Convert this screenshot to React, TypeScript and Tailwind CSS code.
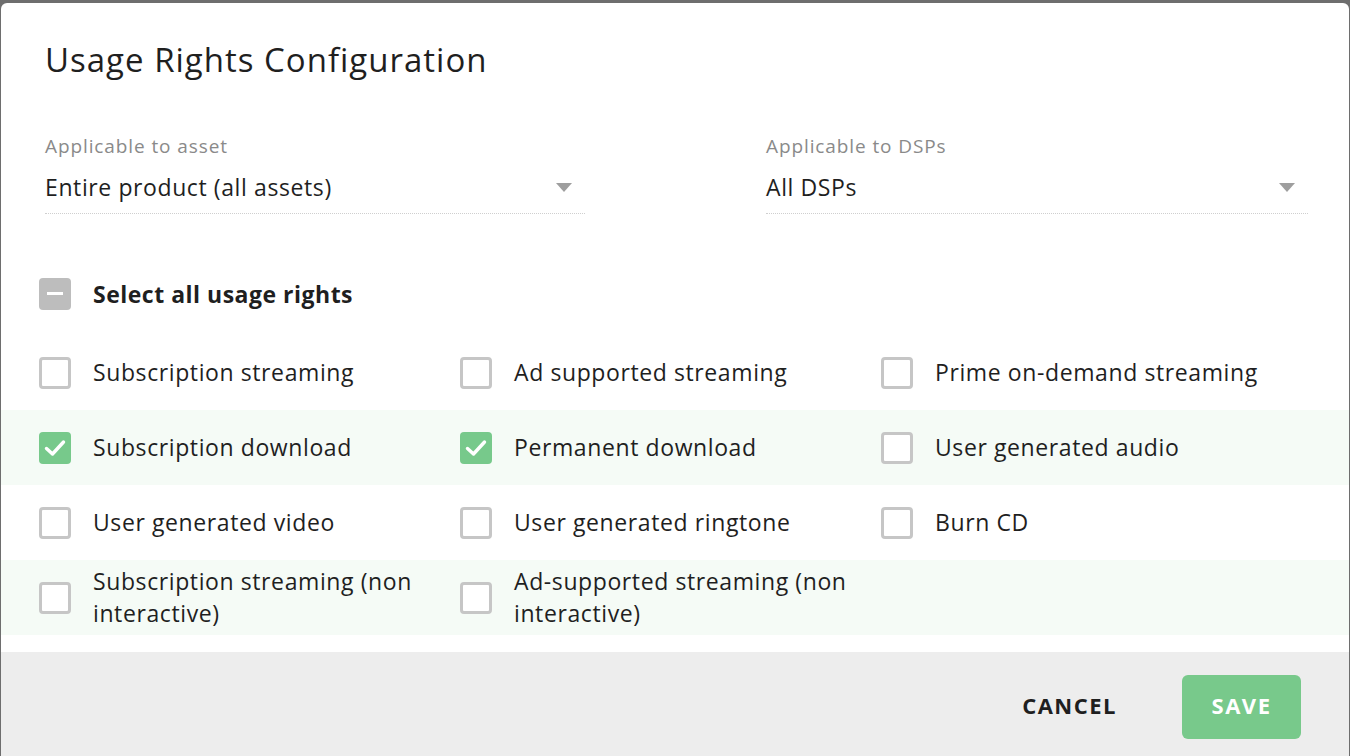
const rights = [
  { label: "Subscription streaming", checked: false },
  { label: "Ad supported streaming", checked: false },
  { label: "Prime on-demand streaming", checked: false },
  { label: "Subscription download", checked: true },
  { label: "Permanent download", checked: true },
  { label: "User generated audio", checked: false },
  { label: "User generated video", checked: false },
  { label: "User generated ringtone", checked: false },
  { label: "Burn CD", checked: false },
  { label: "Subscription streaming (non interactive)", checked: false },
  { label: "Ad-supported streaming (non interactive)", checked: false },
];

const Caret = () => (
  <svg width="16" height="9" viewBox="0 0 16 9" className="shrink-0">
    <path d="M0 0 H16 L8 9 Z" fill="#9e9e9e" />
  </svg>
);

const Box = ({ checked }: { checked: boolean }) =>
  checked ? (
    <div className="w-[32px] h-[32px] shrink-0 rounded-[4px] bg-[#77c98b] flex items-center justify-center">
      <svg width="22" height="18" viewBox="0 0 22 18">
        <path d="M2.5 9.5 L8.5 15 L19.5 3" fill="none" stroke="white" strokeWidth="3.4" strokeLinecap="round" strokeLinejoin="round" />
      </svg>
    </div>
  ) : (
    <div className="w-[32px] h-[32px] shrink-0 rounded-[4px] border-[3px] border-[#c6c6c6] bg-white" />
  );

const Select = ({ label, value }: { label: string; value: string }) => (
  <div className="flex flex-col">
    <div className="text-[19px] leading-[24px] tracking-[0.9px] text-[#8a8a8a]">{label}</div>
    <div className="mt-[14px] flex items-center justify-between border-b border-dotted border-[#cfcfcf] pb-[11px] pr-[13px]">
      <span className="text-[23px] leading-[30px] tracking-[0.6px] text-[#1f1f1f]">{value}</span>
      <Caret />
    </div>
  </div>
);

export default function App() {
  const rows = [0, 1, 2, 3].map((r) => rights.slice(r * 3, r * 3 + 3));
  return (
    <div className="w-screen h-[756px] overflow-hidden bg-[#6e6e6e] pt-[3px] pl-[1px] font-['Open_Sans','Noto_Sans',sans-serif]">
      <div className="w-[1348px] h-[760px] bg-white rounded-t-[6px] flex flex-col">
        <h1 className="pl-[44px] pt-[37px] text-[33px] leading-[40px] tracking-[1px] text-[#1f1f1f] font-normal">
          Usage Rights Configuration
        </h1>
        <div className="grid grid-cols-[540px_542px] gap-x-[181px] pl-[44px] pt-[54px]">
          <Select label="Applicable to asset" value="Entire product (all assets)" />
          <Select label="Applicable to DSPs" value="All DSPs" />
        </div>
        <div className="flex items-center gap-[22px] pl-[38px] pt-[63px] pb-[1px] h-[97px] shrink-0">
          <div className="w-[32px] h-[32px] shrink-0 rounded-[4px] bg-[#bdbdbd] flex items-center justify-center">
            <div className="w-[16px] h-[3px] bg-white" />
          </div>
          <span className="text-[23px] leading-[32px] tracking-[0.5px] font-bold text-[#1f1f1f]">Select all usage rights</span>
        </div>
        <div className="pt-[24px] flex flex-col">
          {rows.map((row, i) => (
            <div
              key={i}
              className={`grid grid-cols-[421px_421px_421px] pl-[38px] h-[75px] items-center ${i % 2 === 1 ? "bg-[#f5fbf6]" : "bg-white"}`}
            >
              {row.map((item) => (
                <div key={item.label} className="flex items-center gap-[22px]">
                  <Box checked={item.checked} />
                  <span className="w-[345px] pb-[2px] text-[23px] leading-[32px] tracking-[0.6px] text-[#1f1f1f]">{item.label}</span>
                </div>
              ))}
            </div>
          ))}
        </div>
        <div className="mt-[17px] flex-1 bg-[#ededed] flex items-start justify-end pr-[48px] pt-[23px] gap-[65px]">
          <button className="h-[64px] pb-[4px] text-[22px] font-bold tracking-[1.5px] text-[#1f1f1f]">CANCEL</button>
          <button className="h-[64px] w-[119px] pb-[4px] rounded-[6px] bg-[#78c98b] text-[22px] font-bold tracking-[1.5px] text-white">SAVE</button>
        </div>
      </div>
    </div>
  );
}
